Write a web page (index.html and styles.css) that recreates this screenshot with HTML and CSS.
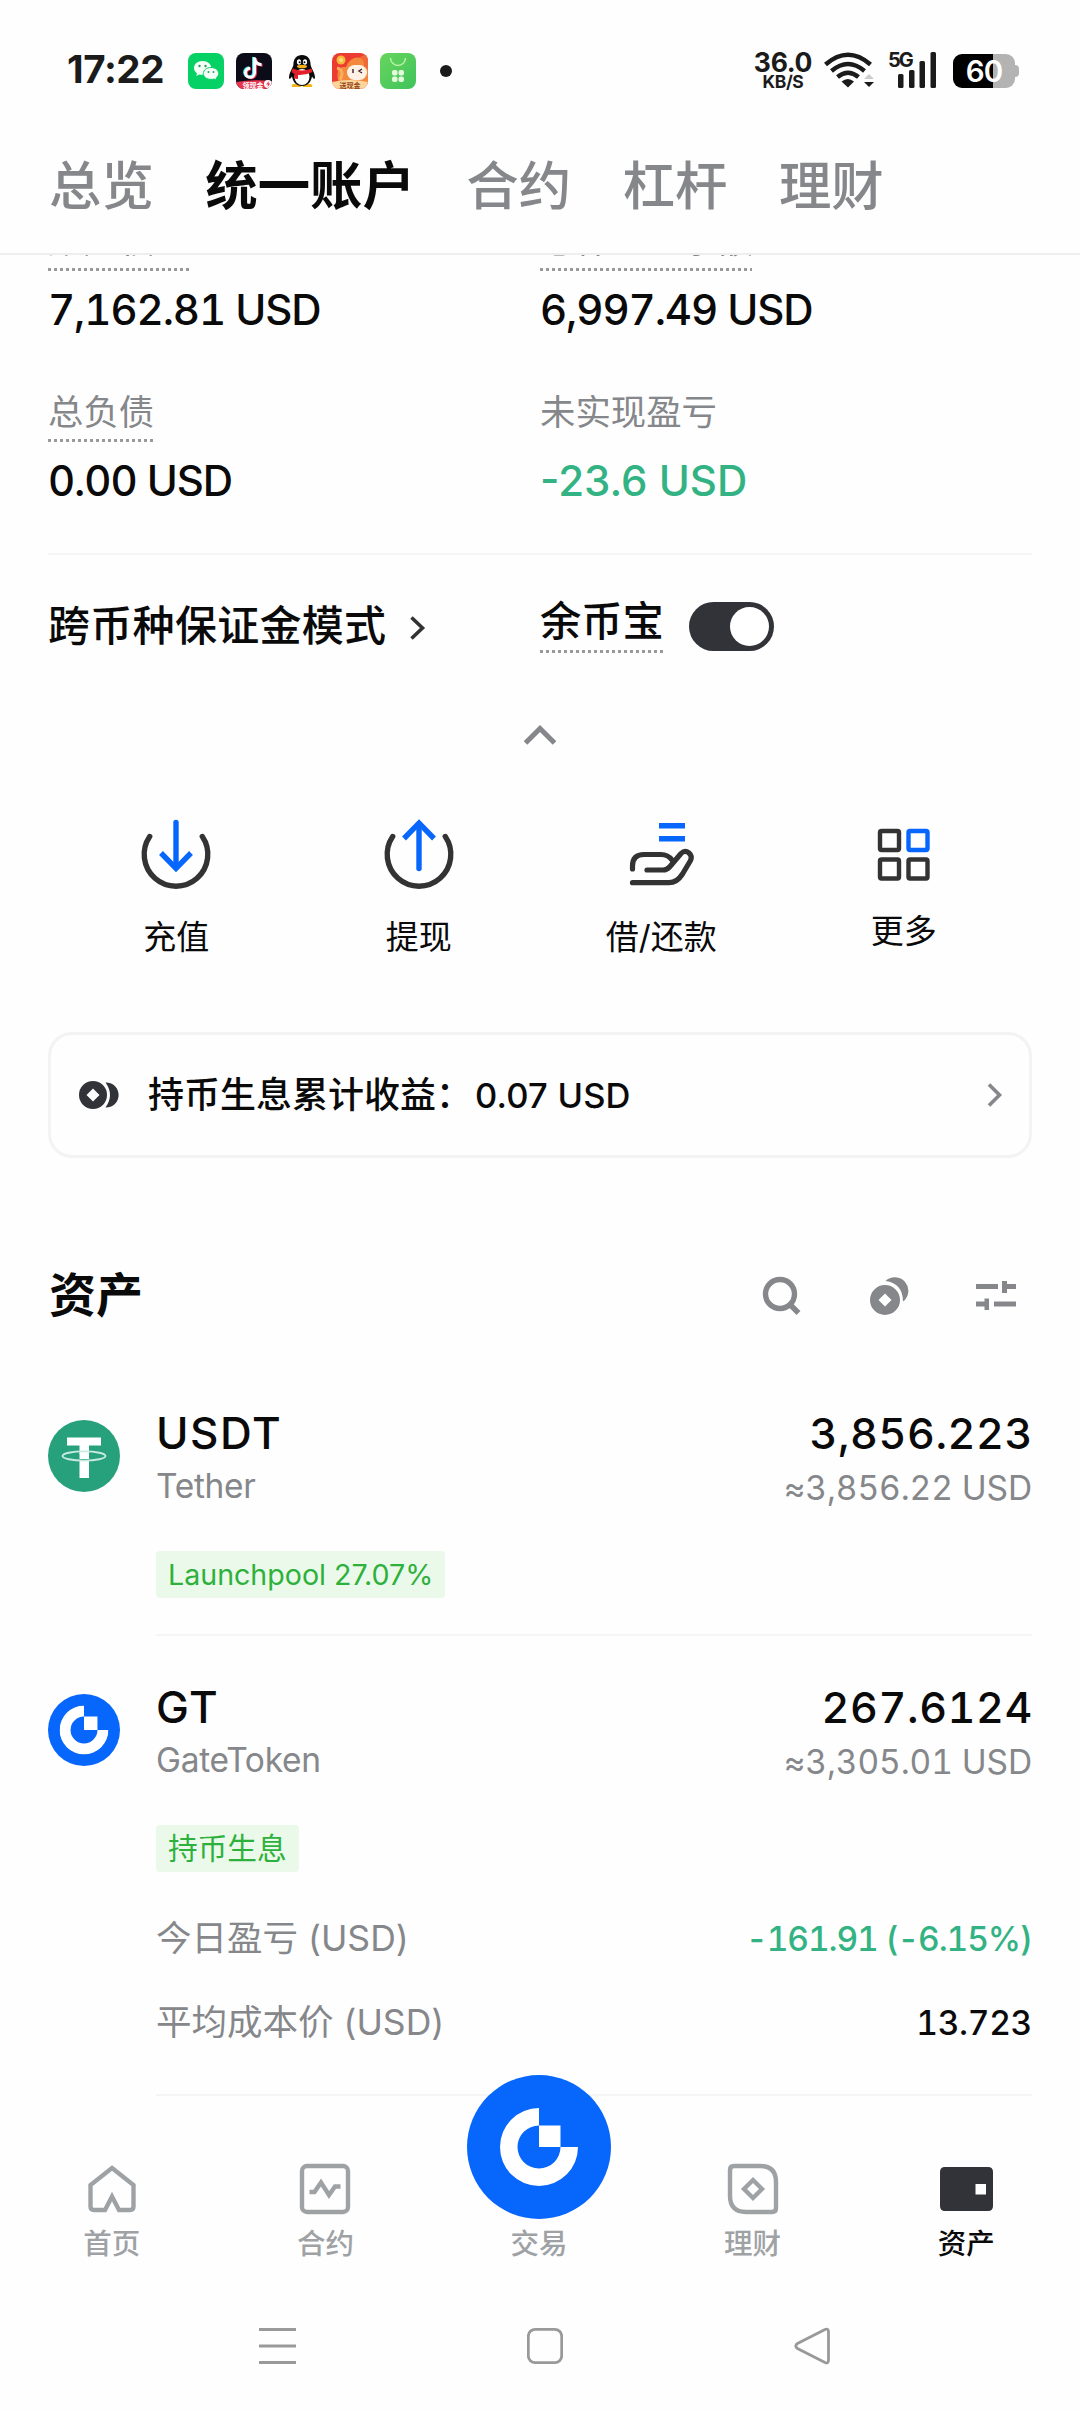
FILE: index.html
```html
<!DOCTYPE html>
<html lang="zh-CN">
<head>
<meta charset="utf-8">
<title>统一账户</title>
<link rel="stylesheet" href="styles.css">
</head>
<body>
<svg class="defs" width="0" height="0" aria-hidden="true">
  <symbol id="gate" viewBox="-39 -39 78 78"><path d="M0-39A39 39 0 1 0 39 0H21.5A21.5 21.5 0 1 1 0-21.5Z"/><path d="M0-21.5H21.5V0H0Z"/></symbol>
</svg>

<div class="status">
  <span class="time">17:22</span>
  <div class="apps">
    <svg width="36" height="36" viewBox="0 0 36 36"><rect width="36" height="36" rx="8" fill="#06d165"/><path d="M14.500 8C9.500 8 6 11 6 15c0 2.300 1.200 4 3 5.300L8.300 23l3-1.600c1 .3 2 .4 3.200.4 5 0 8.800-3 8.800-6.900S19.500 8 14.500 8Z" fill="#f4fff8"/><path d="M23 14.500c4.400 0 7.700 2.600 7.700 6 0 1.900-1 3.400-2.500 4.500l.5 2.300-2.600-1.300c-1 .3-2 .4-3.100.4-4.400 0-7.700-2.500-7.700-5.900s3.300-6 7.700-6Z" fill="#f4fff8" stroke="#06d165"/><g fill="#2d9b60"><circle cx="11.500" cy="13" r="1.200"/><circle cx="17.500" cy="13" r="1.200"/><circle cx="20.500" cy="19" r="1"/><circle cx="25.500" cy="19" r="1"/></g></svg>
    <svg width="36" height="36" viewBox="0 0 36 36"><defs><clipPath id="tile"><rect width="36" height="36" rx="8"/></clipPath></defs><g clip-path="url(#tile)"><path d="M0 0h36v36H0z" fill="#0c0c18"/><g fill="none" stroke-width="3"><path d="M17.500 4v15.500a4.500 4.500 0 1 1-4.500-4.700M17.500 5c.6 4 3.500 6 7 6.200" stroke="#27e6e6"/><path d="M19.500 5v15.500a4.500 4.500 0 1 1-4.500-4.700M19.500 6c.6 4 3.500 6 7 6.200" stroke="#f8315a"/><path d="M18.500 4.500v15.500a4.500 4.500 0 1 1-4.500-4.700M18.500 5.500c.6 4 3.500 6 7 6.200" stroke="#fff"/></g><path d="M0 29q18-3 36-1v8H0z" fill="#e8354f"/><circle cx="32" cy="31" r="4" fill="#fff"/><path d="M33 28l-3 3.500h2l-.5 2.500 3-3.500h-2z" fill="#e8354f"/></g><text x="17" y="34.500" text-anchor="middle" class="tiny light">领现金</text></svg>
    <svg width="36" height="36" viewBox="0 0 36 36"><path d="M9 31h8v3H8q-1-2 1-3ZM19 31h8q2 1 1 3h-9z" fill="#f3b51b"/><path d="M18 2c-5.500 0-8.600 4-8.600 9.500 0 3-4.400 8-4.400 13 0 2 1.200 1.800 3-1 .8 5 4 9.500 10 9.500s9.200-4.500 10-9.500c1.800 2.800 3 3 3 1 0-5-4.400-10-4.400-13C26.600 6 23.500 2 18 2Z" fill="#0a0a0a"/><ellipse cx="18" cy="24" rx="7.500" ry="8" fill="#fff"/><ellipse cx="15" cy="9" rx="2.100" ry="2.800" fill="#fff"/><ellipse cx="21" cy="9" rx="2.100" ry="2.800" fill="#fff"/><circle cx="15.600" cy="9.300" r="1"/><circle cx="20.500" cy="9.300" r="1"/><ellipse cx="18" cy="13.500" rx="5" ry="1.800" fill="#f6b11a"/><path d="M8.500 15.500q9.500 4 19 0l1 3.500q-7 3.500-14.500 3V26l-4-.5.500-4.500-3-2Z" fill="#e3202a"/></svg>
    <svg width="36" height="36" viewBox="0 0 36 36"><g clip-path="url(#tile)"><path d="M0 0h36v36H0z" fill="#ec3b30"/><path d="M14 14Q18 2 31 5l5 7v20H9q-5-5-3-15l4-3Z" fill="#f4883c"/><path d="M28 4q5 4 4 10l4 2V0z" fill="#ef6a38"/><circle cx="9" cy="7" r="4.500" fill="#f8b738"/><circle cx="9" cy="7" r="2" fill="#fbdc83"/><rect x="15" y="12" width="20" height="15" rx="7.500" fill="#fff2e5"/><path d="M21 16v4M30 16l-3 2 3 2" stroke="#402b30" stroke-width="1.500" fill="none"/><path d="M5 15q8 2 3 12" stroke="#f9af59" stroke-width="3" fill="none"/><path d="M0 29q18-4 36 0v7H0z" fill="#fbd59a"/></g><text x="18" y="34.500" text-anchor="middle" class="tiny dark">送现金</text></svg>
    <svg width="36" height="36" viewBox="0 0 36 36"><defs><linearGradient id="leaf" x2="1" y2="1"><stop stop-color="#68d55d"/><stop offset="1" stop-color="#3fc35c"/></linearGradient></defs><rect width="36" height="36" rx="8" fill="url(#leaf)"/><path d="M10.500 5a7.500 7.500 0 0 0 15 0" fill="none" stroke="#b9f3a7" stroke-width="1.500"/><g fill="#e4fadc"><rect x="12" y="17" width="5.500" height="5.500" rx="2"/><rect x="18.500" y="17" width="5.500" height="5.500" rx="2"/><rect x="12" y="23.500" width="5.500" height="5.500" rx="2"/><rect x="18.500" y="23.500" width="5.500" height="5.500" rx="2"/></g></svg>
  </div>
  <i class="more-dot"></i>
  <div class="speed"><b>36.0</b><small>KB/S</small></div>
  <svg class="wifi" width="52" height="36" viewBox="0 0 52 36"><g fill="none" stroke="#1b1b1b" stroke-width="4.500"><path d="M2.500 12.500Q25 -7 47.500 12.500"/><path d="M8.500 19Q25 5 41.500 19"/><path d="M14.500 25Q25 16.500 35.500 25"/></g><path d="M18.500 29.500Q25 24.500 31 29.500L25 35.500Z" fill="#1b1b1b"/><path d="M41 27l5-5 5 5z" fill="#ccc"/><path d="M41 30h10l-5 5z" fill="#1b1b1b"/></svg>
  <div class="signal"><span>5G</span><svg width="40" height="36" viewBox="0 0 40 36" fill="#1b1b1b"><rect y="22" width="5.500" height="14" rx="1.500"/><rect x="11" y="18" width="5.500" height="18" rx="1.500"/><rect x="21.500" y="9" width="5.500" height="27" rx="1.500"/><rect x="32.500" width="5.500" height="36" rx="1.500"/></svg></div>
  <div class="battery"><span>60</span></div>
</div>

<nav class="tabs"><span>总览</span><span class="on">统一账户</span><span>合约</span><span>杠杆</span><span>理财</span></nav>

<main>
  <section class="stats">
    <div><span class="label dots under">账户权益</span><p>7,162.81 USD</p></div>
    <div><span class="label dots under">总保证金余额</span><p>6,997.49 USD</p></div>
    <div><span class="label dots">总负债</span><p>0.00 USD</p></div>
    <div><span class="label">未实现盈亏</span><p class="gain">-23.6 USD</p></div>
  </section>

  <section class="mode">
    <div class="mode-name"><span>跨币种保证金模式</span><svg width="20" height="28" viewBox="0 0 20 28"><path d="M3.500 3.500L14.500 14L3.500 24.500" fill="none" stroke="#333" stroke-width="3.600"/></svg></div>
    <div class="earn"><span class="dots">余币宝</span><i class="toggle"></i></div>
  </section>

  <div class="collapse"><svg width="36" height="24" viewBox="0 0 36 24"><path d="M3.500 20L18 5.500L32.500 20" fill="none" stroke="#85878a" stroke-width="5"/></svg></div>

  <section class="actions">
    <div><svg width="72" height="72" viewBox="0 0 72 72" fill="none" stroke-width="5.400" stroke-linecap="round"><path d="M9.700 17.500A31.800 31.800 0 1 0 62.300 17.500" stroke="#333"/><path d="M36 3.500V48" stroke="#0766fc"/><path d="M21 34L36 49.300L51 34" stroke="#0766fc" stroke-linecap="butt"/></svg><span>充值</span></div>
    <div><svg width="72" height="72" viewBox="0 0 72 72" fill="none" stroke-width="5.400" stroke-linecap="round"><path d="M9.700 17.500A31.800 31.800 0 1 0 62.300 17.500" stroke="#333"/><path d="M36 5V49.500" stroke="#0766fc"/><path d="M21 19.500L36 4.200L51 19.500" stroke="#0766fc" stroke-linecap="butt"/></svg><span>提现</span></div>
    <div><svg width="72" height="72" viewBox="0 0 72 72" fill="none" stroke="#333" stroke-width="5.200" stroke-linecap="round" stroke-linejoin="round"><path d="M34 6.700H60M34 19.700H60" stroke="#0766fc" stroke-width="5.500" stroke-linecap="butt"/><path d="M7.500 50V47Q7.500 35.500 19 35.500H36Q43 35.500 47 41"/><path d="M22 51H38Q42 51 45 47.500L56 34.500Q60 30.500 64 34Q67.500 37 65.500 41.500L57.500 55Q52 63.700 44 63.700H7.500"/></svg><span>借/还款</span></div>
    <div class="tight"><svg width="72" height="72" viewBox="0 0 72 72" fill="none" stroke="#333" stroke-width="4.400"><rect x="12" y="12" width="19" height="19" rx="1.500"/><rect x="40.500" y="12" width="19" height="19" rx="1.500" stroke="#0766fc"/><rect x="12" y="40.500" width="19" height="19" rx="1.500"/><rect x="40.500" y="40.500" width="19" height="19" rx="1.500"/></svg><span>更多</span></div>
  </section>

  <section class="income">
    <svg width="42" height="30" viewBox="0 0 42 30" fill="#323338"><path fill-rule="evenodd" d="M14 1a14 14 0 1 0 0 28a14 14 0 1 0 0-28ZM14 8.500L20.500 15L14 21.500L7.500 15Z"/><path d="M26.500 2.500C44 2.500 44 27.500 26.500 27.500Q35.500 15 26.500 2.500Z"/></svg>
    <span>持币生息累计收益：<b>0.07 USD</b></span>
    <svg class="go" width="18" height="28" viewBox="0 0 18 28"><path d="M3 3.500L13.500 14L3 24.500" fill="none" stroke="#85878a" stroke-width="3.600"/></svg>
  </section>

  <header class="assets-head">
    <h2>资产</h2>
    <div class="tools">
      <svg width="44" height="44" viewBox="0 0 44 44" fill="none" stroke="#85878a" stroke-width="5.400"><circle cx="20" cy="21" r="14.500"/><path d="M30 31.500L38.500 40" stroke-width="5.500"/></svg>
      <svg width="44" height="44" viewBox="0 0 44 44" fill="#85878a"><path d="M18.500 8A13.500 13.500 0 1 1 36 28.500Q36 10.500 18.500 8Z"/><path fill-rule="evenodd" d="M18 12a15 15 0 1 0 0 30a15 15 0 1 0 0-30ZM18 20.500L24.500 27L18 33.500L11.500 27Z"/></svg>
      <svg width="44" height="44" viewBox="0 0 44 44" fill="#85878a"><path d="M2 11H24V16H2ZM28 8H33V11H42V16H33V20H28ZM2 28.500H10.500V25.500H15V37H10.500V33.500H2ZM20 28.500H42V33.500H20Z"/></svg>
    </div>
  </header>

  <article class="asset">
    <svg class="coin" width="72" height="72" viewBox="0 0 72 72"><circle cx="36" cy="36" r="36" fill="#27a17b"/><path d="M19 17.500H53V25.500H41V34H31.500V25.500H19ZM31.500 40H41V58H31.500Z" fill="#fff"/><path d="M31.500 33H41V39H31.500Z" fill="#fff"/><ellipse cx="36" cy="36" rx="21.500" ry="4.600" fill="none" stroke="#c9eadf" stroke-width="1.800"/></svg>
    <div class="detail">
      <div class="line"><div class="left"><h3>USDT</h3><p>Tether</p></div><div class="right"><h3 class="amt">3,856.223</h3><p>≈3,856.22 USD</p></div></div>
      <span class="tag">Launchpool 27.07%</span>
    </div>
  </article>

  <article class="asset last">
    <svg class="coin" width="72" height="72" viewBox="0 0 72 72"><circle cx="36" cy="36" r="36" fill="#0766fc"/><use href="#gate" x="11.600" y="11.600" width="48.800" height="48.800" fill="#fff"/></svg>
    <div class="detail">
      <div class="line"><div class="left"><h3>GT</h3><p>GateToken</p></div><div class="right"><h3 class="amt">267.6124</h3><p>≈3,305.01 USD</p></div></div>
      <span class="tag cn">持币生息</span>
      <div class="row"><span>今日盈亏 (USD)</span><b class="gain pnl">-161.91 (-6.15%)</b></div>
      <div class="row"><span>平均成本价 (USD)</span><b>13.723</b></div>
    </div>
  </article>
</main>

<nav class="bottom">
  <div><svg width="56" height="56" viewBox="0 0 56 56"><path d="M28 7L49.500 24V45.500Q49.500 49 46 49H35L28 35.500L21 49H10Q6.500 49 6.500 45.500V24Z"/></svg><span>首页</span></div>
  <div><svg width="56" height="56" viewBox="0 0 56 56"><rect x="5" y="5" width="46" height="46" rx="5"/><path d="M12.500 31H17.500L24 21.500L32 34L38 25.500H43.500"/></svg><span>合约</span></div>
  <div class="trade"><i><svg width="78" height="78" fill="#fff"><use href="#gate"/></svg></i><span>交易</span></div>
  <div><svg width="56" height="56" viewBox="0 0 56 56"><path d="M9 5H35Q51 5 51 21V47Q51 51 47 51H21Q5 51 5 35V9Q5 5 9 5Z"/><path d="M28 19L37 28L28 37L19 28Z"/></svg><span>理财</span></div>
  <div class="current"><svg width="56" height="56" viewBox="0 0 56 56"><path fill-rule="evenodd" d="M7 6H50Q55 6 55 11V45Q55 50 50 50H7Q2 50 2 45V11Q2 6 7 6ZM37.500 23V33.500H48V23Z"/></svg><span>资产</span></div>
</nav>

<div class="system">
  <svg width="37" height="38" viewBox="0 0 37 38"><path d="M0 2.500H37M0 19H37M0 35.500H37"/></svg>
  <svg width="36" height="38" viewBox="0 0 36 38"><rect x="1.300" y="2.300" width="33.400" height="33.400" rx="7"/></svg>
  <svg width="36" height="38" viewBox="0 0 36 38"><path d="M31 2.500Q34.500 1 34.500 5V33Q34.500 37 31 35.500L3.500 21.500Q0 19 3.500 16.500Z"/></svg>
</div>
</body>
</html>
```
FILE: styles.css
```css
* { box-sizing: border-box; margin: 0; padding: 0; }
body {
  width: 1080px; height: 2412px; overflow: hidden;
  background: #fefefe; color: #0a0a0b;
  font-family: Inter, "Noto Sans CJK SC", sans-serif;
}
svg { display: block; flex: none; }
.defs { position: absolute; }
i { font-style: normal; }

.status { display: flex; height: 130px; padding: 52px 61px 0 67px; color: #1b1b1b; }
.time { width: 121px; font-size: 38.500px; font-weight: 700; line-height: 35px; letter-spacing: -.4px; white-space: nowrap; }
.apps { display: flex; gap: 12px; margin-top: 1px; }
.tiny { font-size: 7px; font-weight: 700; font-family: "Noto Sans CJK SC", sans-serif; }
.light { fill: #fff; }
.dark { fill: #94451c; }
.more-dot { width: 12px; height: 12px; border-radius: 50%; background: #1b1b1b; margin: 13px 0 0 24px; }
.speed { display: flex; flex-direction: column; align-items: center; width: 60px; margin-left: 301px; }
.speed b { font-size: 26.500px; line-height: 20px; font-weight: 700; letter-spacing: -.3px; }
.speed small { font-size: 17.500px; line-height: 17px; margin-top: 1px; font-weight: 700; letter-spacing: -.4px; }
.wifi { margin-left: 10px; }
.signal { display: grid; margin-left: 13px; width: 48px; }
.signal > * { grid-area: 1 / 1; }
.signal span { font-size: 20px; line-height: 16px; font-weight: 700; letter-spacing: -2px; }
.signal svg { margin-left: 10px; }
.battery { position: relative; width: 62px; height: 34px; margin: 2px 0 0 17px; border-radius: 9px; background: linear-gradient(90deg, #000 40px, #b3b3b3 40px); text-align: center; }
.battery::after { content: ""; position: absolute; left: 62px; top: 11px; width: 4px; height: 12px; border-radius: 0 4px 4px 0; background: #b3b3b3; }
.battery span { font-size: 29.500px; line-height: 35px; font-weight: 600; letter-spacing: -1px; color: #fff; }

.tabs { display: flex; gap: 51.500px; height: 125px; padding: 26px 49px 0; border-bottom: 2px solid #eee; font-size: 52.400px; line-height: 60px; font-weight: 500; color: #85878a; white-space: nowrap; }
.tabs .on { color: #0a0a0b; font-weight: 700; }

main { overflow: hidden; padding: 0 48px; }
.stats { display: grid; grid-template-columns: 1fr 1fr; row-gap: 57px; margin-top: -33px; padding-bottom: 46px; border-bottom: 2px solid #f5f5f6; }
.stats > div { height: 114px; }
.label { display: block; width: max-content; height: 49px; font-size: 35.400px; line-height: 39px; color: #85878a; }
.under { line-height: 37px; }
.stats p { margin-top: 14px; font-size: 42px; line-height: 49px; font-weight: 500; font-variant-numeric: tabular-nums; letter-spacing: -1.100px; }
.dots { background: repeating-linear-gradient(90deg, #999 0 3px, transparent 3px 6px) left bottom / 100% 3px no-repeat; }
.stats .gain { color: #33b383; letter-spacing: 0; font-variant-numeric: normal; }

.mode { display: grid; grid-template-columns: 1fr 1fr; height: 140px; padding-top: 45px; font-size: 42px; font-weight: 500; line-height: 42px; }
.mode-name { display: flex; gap: 22px; margin-top: 5px; align-items: flex-start; letter-spacing: .3px; }
.mode-name svg { margin-top: 9px; }
.earn { display: flex; gap: 25px; }
.earn .dots { height: 53px; font-size: 41.300px; }
.toggle { width: 85px; height: 49px; margin-top: 2px; border-radius: 25px; padding: 5px; background: #323338; }
.toggle::after { content: ""; display: block; width: 39px; height: 39px; border-radius: 50%; background: #fff; margin-left: auto; }

.collapse { display: flex; justify-content: center; align-items: center; height: 80px; }

.actions { display: grid; grid-template-columns: repeat(4, 1fr); height: 257px; padding: 44px 7px 0; font-size: 33px; line-height: 36px; }
.actions > div { display: flex; flex-direction: column; align-items: center; gap: 28px; }
.actions .tight { gap: 22px; }

.income { display: flex; align-items: center; height: 126px; border: 3px solid #f3f3f4; border-radius: 24px; padding: 0 25px 0 28px; font-size: 36px; font-weight: 500; line-height: 40px; }
.income span { margin-left: 27px; }
.income b { font-weight: 500; font-size: 34.500px; letter-spacing: .2px; margin-left: 3px; }
.go { margin-left: auto; }

.assets-head { display: flex; justify-content: space-between; align-items: center; height: 134px; margin-top: 70px; padding: 0 14px 0 1px; }
.assets-head h2 { font-size: 47px; font-weight: 700; line-height: 50px; }
.tools { display: flex; gap: 63px; }

.asset { display: grid; grid-template-columns: 108px 1fr; }
.coin { margin-top: 58px; }
.detail { padding-top: 51px; padding-bottom: 36px; border-bottom: 2px solid #f5f5f6; }
.line { display: flex; justify-content: space-between; height: 91px; }
.line h3 { font-size: 44px; font-weight: 500; line-height: 40px; letter-spacing: 1.500px; }
.line p { margin-top: 15px; font-size: 33.500px; line-height: 36px; letter-spacing: -.3px; color: #85878a; }
.right { text-align: right; font-variant-numeric: tabular-nums; }
.right .amt { font-size: 43px; letter-spacing: .6px; margin-right: -1px; }
.right p { margin-top: 17px; letter-spacing: -.1px; }
.tag { display: block; width: max-content; height: 47px; margin-top: 47px; padding: 0 12px; border-radius: 4px; background: #ebf9eb; color: #2eb13c; font-size: 28.600px; line-height: 47px; }
.tag.cn { font-size: 29.700px; }
.row { display: flex; justify-content: space-between; margin-top: 47px; height: 40px; font-size: 35.500px; line-height: 40px; color: #85878a; }
.row + .row { margin-top: 44px; }
.row b { font-weight: 550; font-size: 33.500px; letter-spacing: -.3px; color: #0a0a0b; font-variant-numeric: tabular-nums; }
.row .gain { color: #33b383; letter-spacing: -1.100px; }
.last .detail { padding-bottom: 51px; }

.bottom { display: grid; grid-template-columns: repeat(5, 1fr); height: 194px; padding: 0 7px 0 5px; font-size: 28.500px; font-weight: 500; line-height: 34px; color: #9fa2a5; }
.bottom > div { display: flex; flex-direction: column; align-items: center; padding-top: 65px; gap: 10px; }
.bottom svg { fill: none; stroke: #9fa2a5; stroke-width: 4.400; }
.bottom .trade { padding-top: 0; gap: 8px; margin-top: -21px; position: relative; z-index: 1; }
.trade i { display: flex; align-items: center; justify-content: center; width: 144px; height: 144px; border-radius: 50%; background: #0766fc; }
.bottom .trade svg { fill: #fff; stroke: none; }
.bottom .current { color: #0a0a0b; }
.bottom .current svg { fill: #323338; stroke: none; }

.system { display: flex; align-items: center; height: 112px; padding-left: 259px; }
.system svg { fill: none; stroke: #999; stroke-width: 2.800; }
.system svg + svg { margin-left: 231px; }
```
